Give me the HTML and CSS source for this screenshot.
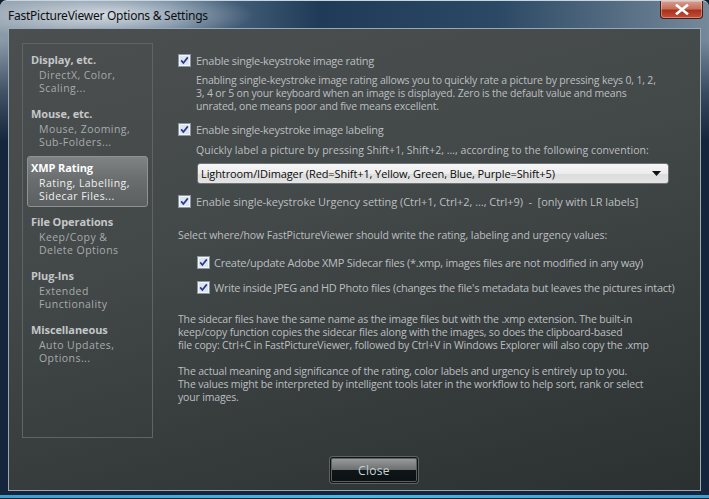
FILE: index.html
```html
<!DOCTYPE html>
<html lang="en">
<head>
  <meta charset="UTF-8">
  <title>FastPictureViewer Options &amp; Settings</title>
  <link rel="stylesheet" href="styles.css">
</head>
<body>

  <div class="window">
    <div class="titlebar">
      <span class="title">FastPictureViewer Options &amp; Settings</span>
      <button class="win-close">
        <svg width="16" height="11" viewBox="0 0 16 11"><path d="M3 1.5 L13 9.5 M13 1.5 L3 9.5" stroke="#fff" stroke-width="2.6" stroke-linecap="square"/></svg>
      </button>
    </div>

    <div class="client">
      <div class="panes">

        <!-- Left navigation -->
        <div class="sidebar">
          <div class="group">
            <div class="group-title">Display, etc.</div>
            <div class="group-sub">DirectX, Color,</div>
            <div class="group-sub">Scaling...</div>
          </div>
          <div class="group">
            <div class="group-title">Mouse, etc.</div>
            <div class="group-sub">Mouse, Zooming,</div>
            <div class="group-sub">Sub-Folders...</div>
          </div>
          <div class="group active">
            <div class="group-title">XMP Rating</div>
            <div class="group-sub">Rating, Labelling,</div>
            <div class="group-sub">Sidecar Files...</div>
          </div>
          <div class="group">
            <div class="group-title">File Operations</div>
            <div class="group-sub">Keep/Copy &amp;</div>
            <div class="group-sub">Delete Options</div>
          </div>
          <div class="group">
            <div class="group-title">Plug-Ins</div>
            <div class="group-sub">Extended</div>
            <div class="group-sub">Functionality</div>
          </div>
          <div class="group">
            <div class="group-title">Miscellaneous</div>
            <div class="group-sub">Auto Updates,</div>
            <div class="group-sub">Options...</div>
          </div>
        </div>

        <!-- Settings -->
        <div class="main">
          <label class="check row-1">
            <svg class="cb" viewBox="0 0 13 13"><rect x="0.5" y="0.5" width="12" height="12" fill="#f2f4f7" stroke="#8a96a3"/><rect x="2" y="2" width="9" height="9" fill="#dde4ec"/><path d="M3.2 6.4 L5.4 9 L9.8 3.4" fill="none" stroke="#26398a" stroke-width="1.7"/></svg>
            Enable single-keystroke image rating
          </label>
          <div class="desc para-1">
            <div class="line">Enabling single-keystroke image rating allows you to quickly rate a picture by pressing keys 0, 1, 2,</div>
            <div class="line">3, 4 or 5 on your keyboard when an image is displayed. Zero is the default value and means</div>
            <div class="line">unrated, one means poor and five means excellent.</div>
          </div>

          <label class="check row-2">
            <svg class="cb" viewBox="0 0 13 13"><rect x="0.5" y="0.5" width="12" height="12" fill="#f2f4f7" stroke="#8a96a3"/><rect x="2" y="2" width="9" height="9" fill="#dde4ec"/><path d="M3.2 6.4 L5.4 9 L9.8 3.4" fill="none" stroke="#26398a" stroke-width="1.7"/></svg>
            Enable single-keystroke image labeling
          </label>
          <div class="desc para-2">
            <div class="line">Quickly label a picture by pressing Shift+1, Shift+2, …, according to the following convention:</div>
          </div>

          <div class="select">
            <span>Lightroom/IDimager (Red=Shift+1, Yellow, Green, Blue, Purple=Shift+5)</span>
            <svg width="9" height="5" viewBox="0 0 9 5"><path d="M0 0 H9 L4.5 5 Z" fill="#111"/></svg>
          </div>

          <label class="check row-3">
            <svg class="cb" viewBox="0 0 13 13"><rect x="0.5" y="0.5" width="12" height="12" fill="#f2f4f7" stroke="#8a96a3"/><rect x="2" y="2" width="9" height="9" fill="#dde4ec"/><path d="M3.2 6.4 L5.4 9 L9.8 3.4" fill="none" stroke="#26398a" stroke-width="1.7"/></svg>
            Enable single-keystroke Urgency setting (Ctrl+1, Ctrl+2, …, Ctrl+9) &nbsp;- &nbsp;[only with LR labels]
          </label>

          <div class="plain select-where">
            <div class="line">Select where/how FastPictureViewer should write the rating, labeling and urgency values:</div>
          </div>

          <label class="check sub row-4">
            <svg class="cb" viewBox="0 0 13 13"><rect x="0.5" y="0.5" width="12" height="12" fill="#f2f4f7" stroke="#8a96a3"/><rect x="2" y="2" width="9" height="9" fill="#dde4ec"/><path d="M3.2 6.4 L5.4 9 L9.8 3.4" fill="none" stroke="#26398a" stroke-width="1.7"/></svg>
            Create/update Adobe XMP Sidecar files (*.xmp, images files are not modified in any way)
          </label>
          <label class="check sub row-5">
            <svg class="cb" viewBox="0 0 13 13"><rect x="0.5" y="0.5" width="12" height="12" fill="#f2f4f7" stroke="#8a96a3"/><rect x="2" y="2" width="9" height="9" fill="#dde4ec"/><path d="M3.2 6.4 L5.4 9 L9.8 3.4" fill="none" stroke="#26398a" stroke-width="1.7"/></svg>
            Write inside JPEG and HD Photo files (changes the file's metadata but leaves the pictures intact)
          </label>

          <div class="plain note-1">
            <div class="line">The sidecar files have the same name as the image files but with the .xmp extension. The built-in</div>
            <div class="line">keep/copy function copies the sidecar files along with the images, so does the clipboard-based</div>
            <div class="line">file copy: Ctrl+C in FastPictureViewer, followed by Ctrl+V in Windows Explorer will also copy the .xmp</div>
          </div>
          <div class="plain note-2">
            <div class="line">The actual meaning and significance of the rating, color labels and urgency is entirely up to you.</div>
            <div class="line">The values might be interpreted by intelligent tools later in the workflow to help sort, rank or select</div>
            <div class="line">your images.</div>
          </div>
        </div>
      </div>

      <div class="footer">
        <button class="close-btn">Close</button>
      </div>
    </div>
  </div>

</body>
</html>
```

FILE: styles.css
```css
body {
  margin: 0;
  padding: 0;
  background-color: #0f1c2c;
  font-family: "Open Sans", "Noto Sans", sans-serif;
}

.window {
  width: 709px;
  height: 499px;
  box-sizing: border-box;
  padding: 0 8px 8px 8px;
  border-radius: 7px 7px 0 0;
  border-top: 1px solid #c9d4dd;
  background:
    radial-gradient(ellipse 150px 26px at 105px 14px, rgba(255, 255, 255, 0.7), rgba(255, 255, 255, 0) 100%),
    linear-gradient(to bottom, rgba(21, 37, 59, 0) 40px, rgba(21, 37, 59, 0.6) 90px, #15253b 140px),
    linear-gradient(to right, #8a9aa9 0%, #5d7790 24%, #1f3b57 45%, #2b4864 70%, #75899a 100%);
  position: relative;
  overflow: hidden;
}

.window::after {
  content: "";
  position: absolute;
  left: 0;
  right: 0;
  bottom: 1px;
  height: 3px;
  background: linear-gradient(to right, #3b9fd1, #48b8e6 50%, #3b9fd1);
}

/* Title bar */
.titlebar {
  height: 27px;
  display: flex;
  align-items: flex-start;
}

.title {
  margin-top: 6px;
  font-family: "Noto Sans", sans-serif;
  font-size: 12px;
  color: #0c0f12;
  letter-spacing: -0.25px;
}

.win-close {
  margin-left: auto;
  margin-right: -2px;
  margin-top: 0;
  width: 43px;
  height: 18px;
  border: 1px solid #4a1c18;
  border-top: none;
  border-radius: 0 0 4px 4px;
  background: linear-gradient(to bottom, #dc9d8f 0%, #c4705c 45%, #a8321c 55%, #c4503a 100%);
  box-shadow: inset 0 0 0 1px rgba(255, 220, 210, 0.4);
  display: flex;
  align-items: center;
  justify-content: center;
  padding: 0;
}

/* Client area */
.client {
  height: 463px;
  box-sizing: border-box;
  border: 1px solid #98a8b6;
  padding: 14px 13px 7px 13px;
  background: linear-gradient(165deg, #4b4f50 0%, #434849 40%, #373c3d 70%, #2b3031 100%);
  display: flex;
  flex-direction: column;
}

.panes {
  display: flex;
  height: 395px;
}

.sidebar {
  width: 131px;
  box-sizing: border-box;
  border: 1px solid #5f6466;
  padding-top: 4px;
  flex-shrink: 0;
}

.group {
  margin: 0 4px 3px 4px;
  padding: 4px 4px 3px 3px;
  border: 1px solid transparent;
  border-radius: 3px;
  font-size: 11px;
  line-height: 13px;
}

.group-title {
  font-weight: bold;
  color: #c4c7c8;
  letter-spacing: -0.1px;
  margin-bottom: 3px;
}

.group-sub {
  height: 13px;
  padding-left: 8px;
  font-size: 10.5px;
  color: #a7abac;
  letter-spacing: 0.45px;
}

.group.active {
  background: linear-gradient(to bottom, #7f8384 0%, #6a6e6f 45%, #5b5f60 100%);
  border-color: #8e9293;
}

.group.active .group-title {
  color: #ffffff;
}

.group.active .group-sub {
  color: #f0f0f0;
}

/* Main column */
.main {
  margin-left: 25px;
  padding-top: 11px;
  font-size: 10.5px;
  line-height: 13px;
  color: #bcbfc0;
  letter-spacing: -0.17px;
}

.line {
  height: 13px;
  white-space: nowrap;
}

.check {
  display: flex;
  align-items: center;
  gap: 5px;
  height: 13px;
  white-space: nowrap;
  font-size: 11px;
  letter-spacing: -0.26px;
}

.cb {
  width: 13px;
  height: 13px;
  flex-shrink: 0;
}

.check.sub {
  margin-left: 19px;
  gap: 4px;
}

.desc {
  margin-left: 18px;
}

.para-1 { margin-top: 7px; }
.row-2 { margin-top: 10px; }
.para-2 { margin-top: 8px; letter-spacing: 0.05px; }
.row-3 { margin-top: 11px; letter-spacing: -0.05px; }
.select-where { margin-top: 21px; letter-spacing: -0.06px; }
.row-4 { margin-top: 14px; }
.row-5 { margin-top: 12px; }
.note-1 { margin-top: 19px; }
.note-2 { margin-top: 13px; }

.select {
  margin: 6px 0 0 19px;
  width: 472px;
  height: 21px;
  box-sizing: border-box;
  border: 1px solid #6f7476;
  border-radius: 3px;
  background: linear-gradient(to bottom, #f7f7f7 0%, #ececec 50%, #dcdcdc 51%, #e4e4e4 100%);
  display: flex;
  align-items: center;
  justify-content: space-between;
  padding: 0 7px 0 3px;
  color: #0a0a0a;
  font-size: 11px;
  letter-spacing: -0.1px;
  white-space: nowrap;
}

/* Footer */
.footer {
  margin-top: 19px;
  padding-left: 308px;
}

.close-btn {
  width: 88px;
  height: 26px;
  border: 1px solid #101415;
  border-radius: 3px;
  box-shadow: 0 0 0 1px #5d6264, inset 0 0 0 1px #5a5f61;
  background: linear-gradient(to bottom, #9a9e9f 0%, #6d7172 48%, #101617 50%, #0c1213 100%);
  color: #c9d1d8;
  font-family: "Open Sans", sans-serif;
  font-size: 12px;
  letter-spacing: 0.3px;
  padding: 0;
  cursor: pointer;
}
```
